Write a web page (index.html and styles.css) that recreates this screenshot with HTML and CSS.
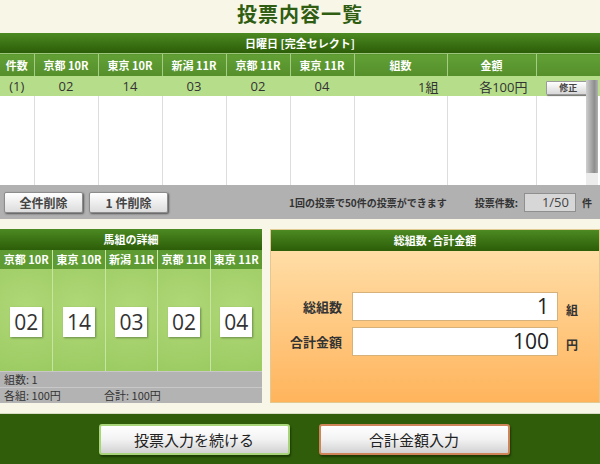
FILE: index.html
```html
<!DOCTYPE html>
<html lang="ja">
<head>
    <meta charset="utf-8"/>
    <link rel="stylesheet" href="styles.css">
</head>
<body>

    <h1 class="title">投票内容一覧</h1>

    <div class="list">
        <div class="bar">日曜日 [完全セレクト]</div>
        <div class="list-body">
            <table class="bets">
                <colgroup>
                    <col style="width:34px"><col style="width:64px"><col style="width:64px">
                    <col style="width:64px"><col style="width:64px"><col style="width:64px">
                    <col style="width:93px"><col style="width:89px"><col>
                </colgroup>
                <tr class="head">
                    <th>件数</th><th>京都 10R</th><th>東京 10R</th><th>新潟 11R</th><th>京都 11R</th>
                    <th>東京 11R</th><th>組数</th><th>金額</th><th></th>
                </tr>
                <tr class="row">
                    <td>(1)</td><td>02</td><td>14</td><td>03</td><td>02</td><td>04</td>
                    <td class="r">1組</td><td class="r">各100円</td>
                    <td class="fix-cell"><button type="button" class="fix">修正</button></td>
                </tr>
                <tr class="empty">
                    <td></td><td></td><td></td><td></td><td></td><td></td><td></td><td></td><td></td>
                </tr>
            </table>
            <div class="scroll"><div class="thumb"></div></div>
        </div>
        <div class="tools">
            <button type="button" class="btn">全件削除</button>
            <button type="button" class="btn">1 件削除</button>
            <span class="note">1回の投票で50件の投票ができます</span>
            <span class="count-label">投票件数:</span>
            <span class="count">1/50</span>
            <span class="count-unit">件</span>
        </div>
    </div>

    <div class="panels">
        <div class="detail">
            <div class="phead">馬組の詳細</div>
            <div class="races">
                <div class="race"><div class="race-name">京都 10R</div><div class="field"><span class="num">02</span></div></div>
                <div class="race"><div class="race-name">東京 10R</div><div class="field"><span class="num">14</span></div></div>
                <div class="race"><div class="race-name">新潟 11R</div><div class="field"><span class="num">03</span></div></div>
                <div class="race"><div class="race-name">京都 11R</div><div class="field"><span class="num">02</span></div></div>
                <div class="race"><div class="race-name">東京 11R</div><div class="field"><span class="num">04</span></div></div>
            </div>
            <div class="sum">組数: 1</div>
            <div class="sum"><span class="each">各組: 100円</span><span>合計: 100円</span></div>
        </div>

        <div class="total">
            <div class="phead">総組数･合計金額</div>
            <div class="total-body">
                <div class="trow">
                    <span class="tlabel">総組数</span>
                    <span class="tvalue">1</span>
                    <span class="tunit">組</span>
                </div>
                <div class="trow">
                    <span class="tlabel">合計金額</span>
                    <span class="tvalue">100</span>
                    <span class="tunit">円</span>
                </div>
            </div>
        </div>
    </div>

    <div class="actions">
        <button type="button" class="big go">投票入力を続ける</button>
        <button type="button" class="big calc">合計金額入力</button>
    </div>

</body>
</html>
```

FILE: styles.css
```css
/* 投票内容一覧 */

body {
    margin: 0;
    width: 600px;
    background-color: #f8f6e6;
    font-family: "Noto Sans CJK JP", "Open Sans", sans-serif;
    color: #333;
}

.title {
    margin: 0;
    height: 33px;
    line-height: 27px;
    text-align: center;
    font-size: 20px;
    font-weight: bold;
    color: #2f5d12;
    letter-spacing: 1px;
}

.bar,
.phead {
    background: linear-gradient(#4c8a22, #2c5d08);
    color: #fff;
    font-weight: bold;
    text-align: center;
}

.bar {
    height: 20px;
    line-height: 20px;
    font-size: 11px;
}

.list-body {
    position: relative;
}

.bets {
    width: 100%;
    border-collapse: collapse;
    table-layout: fixed;
}

.bets th,
.bets td {
    padding: 0;
    border-left: 1px solid #ddd;
    text-align: center;
}

.bets th:first-child,
.bets td:first-child {
    border-left: none;
}

.head th {
    height: 22px;
    background: linear-gradient(#62a035, #558f2b);
    border-left: 1px solid #a6cc85;
    border-top: 1px solid #9cc47a;
    color: #fff;
    font-size: 11px;
}

.row td {
    height: 20px;
    background-color: #b6de8a;
    border-left-color: #b6de8a;
    font-size: 13px;
    font-family: "Open Sans", "Noto Sans CJK JP", sans-serif;
}

.row td.r {
    text-align: right;
    padding-right: 8px;
}

.fix {
    width: 44px;
    height: 14px;
    padding: 0;
    border: 1px solid #9a9a9a;
    border-radius: 1px;
    background: linear-gradient(#fff, #d8d8d8);
    font-family: "Noto Sans CJK JP", sans-serif;
    font-size: 9px;
    font-weight: bold;
    line-height: 12px;
    color: #444;
    box-shadow: 1px 1px 1px #777;
}

.empty td {
    height: 89px;
    background-color: #fff;
}

.scroll {
    position: absolute;
    right: 2px;
    top: 27px;
    width: 12px;
    height: 105px;
    background-color: #ececec;
}

.thumb {
    height: 93px;
    background: linear-gradient(90deg, #cfcfcf, #8e8e8e 70%, #b0b0b0);
}

.tools {
    height: 34px;
    display: flex;
    align-items: center;
    padding-left: 4px;
    background-color: #b1b1b1;
    font-size: 10px;
    font-weight: bold;
    white-space: nowrap;
}

.btn {
    flex-shrink: 0;
    width: 79px;
    height: 21px;
    margin-right: 6px;
    padding: 0;
    border: 1px solid #8c8c8c;
    border-radius: 2px;
    background: linear-gradient(#fff, #dcdcdc);
    box-shadow: 1px 1px 2px #555;
    font-family: "Noto Sans CJK JP", sans-serif;
    font-size: 12px;
    font-weight: bold;
    color: #444;
}

.note {
    margin-left: auto;
}

.count-label {
    margin-left: 28px;
}

.count {
    flex-shrink: 0;
    width: 44px;
    height: 17px;
    margin-left: 6px;
    padding-right: 6px;
    border: 1px solid #8f8f8f;
    background-color: #d7d7d7;
    font-family: "Open Sans", sans-serif;
    font-size: 13px;
    font-weight: normal;
    line-height: 17px;
    text-align: right;
    color: #444;
}

.count-unit {
    margin-left: 6px;
    margin-right: 8px;
}

.panels {
    display: flex;
    gap: 8px;
    margin-top: 10px;
}

.detail {
    width: 262px;
}

.phead {
    height: 21px;
    line-height: 21px;
    font-size: 11px;
}

.races {
    display: grid;
    grid-template-columns: repeat(5, 1fr);
}

.race {
    border-left: 1px solid #c6e4a2;
}

.race:first-child {
    border-left: none;
}

.race-name {
    height: 19px;
    line-height: 19px;
    background-color: #5e9c33;
    color: #fff;
    font-size: 11px;
    font-weight: bold;
    text-align: center;
}

.field {
    height: 102px;
    display: flex;
    align-items: center;
    justify-content: center;
    background: radial-gradient(circle at 50% 40%, #b0d878, #9ccb62);
}

.num {
    width: 32px;
    height: 30px;
    margin-top: 3px;
    background-color: #fff;
    box-shadow: 1px 1px 2px #6a8a4a;
    font-family: "Open Sans", sans-serif;
    font-size: 21px;
    line-height: 30px;
    text-align: center;
    color: #333;
}

.sum {
    height: 15px;
    line-height: 15px;
    padding-left: 4px;
    background-color: #b3b3b3;
    border-top: 1px solid #c8c8c8;
    font-size: 11px;
    color: #333;
}

.each {
    display: inline-block;
    width: 100px;
}

.total {
    flex: 1;
    border: 1px solid #e2c992;
}

.total-body {
    height: 151px;
    padding-top: 41px;
    box-sizing: border-box;
    background: linear-gradient(#ffdda6, #ffb45c);
}

.trow {
    display: flex;
    align-items: center;
    margin-bottom: 6px;
}

.tlabel {
    width: 71px;
    margin-right: 10px;
    text-align: right;
    font-size: 13px;
    font-weight: bold;
    color: #333;
}

.tvalue {
    width: 196px;
    height: 27px;
    padding-right: 8px;
    border: 1px solid #d6b27a;
    background-color: #fff;
    font-family: "Open Sans", sans-serif;
    font-size: 21px;
    line-height: 27px;
    text-align: right;
    color: #222;
}

.tunit {
    margin-left: 8px;
    margin-top: 6px;
    font-size: 12px;
    font-weight: bold;
}

.actions {
    height: 50px;
    margin-top: 10px;
    display: flex;
    align-items: center;
    justify-content: center;
    gap: 29px;
    background-color: #2f5d09;
    border-top: 1px solid #d8dcc4;
}

.big {
    width: 191px;
    height: 31px;
    padding: 0;
    border-radius: 3px;
    background: linear-gradient(#fff, #f2f2f2 50%, #d2d2d2);
    font-family: "Noto Sans CJK JP", sans-serif;
    font-size: 15px;
    color: #222;
    box-shadow: 1px 2px 2px #1d3a05;
}

.go {
    margin-left: 8px;
    border: 2px solid #a8d47a;
}

.calc {
    border: 2px solid #d0845a;
}
```
